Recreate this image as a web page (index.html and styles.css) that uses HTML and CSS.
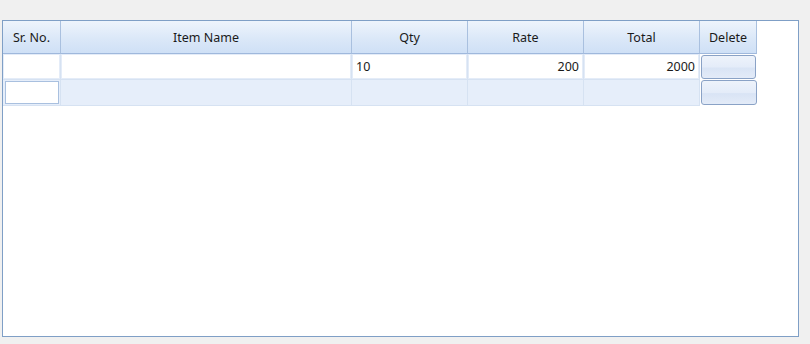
FILE: index.html
```html
<!DOCTYPE html>
<html>
<head>
<meta charset="utf-8">
<link rel="stylesheet" href="styles.css">
</head>
<body>
<div class="frame">
  <div class="grid">
    <div class="hd">Sr. No.</div>
    <div class="hd">Item Name</div>
    <div class="hd">Qty</div>
    <div class="hd">Rate</div>
    <div class="hd">Total</div>
    <div class="hd">Delete</div>

    <div class="cell r1"><div class="ed"></div></div>
    <div class="cell r1"><div class="ed"></div></div>
    <div class="cell r1"><div class="ed left">10</div></div>
    <div class="cell r1"><div class="ed right">200</div></div>
    <div class="cell r1"><div class="ed right">2000</div></div>
    <div class="cell r1 btncell"><div class="btn"></div></div>

    <div class="cell r2"><div class="input"></div></div>
    <div class="cell r2"></div>
    <div class="cell r2"></div>
    <div class="cell r2"></div>
    <div class="cell r2"></div>
    <div class="cell r2 btncell"><div class="btn"></div></div>
  </div>
</div>
</body>
</html>
```

FILE: styles.css
```css
html, body {
  margin: 0;
  padding: 0;
  background: #f0f0f0;
}
body {
  padding: 20px 0 0 2px;
  font-family: "Noto Sans", "Open Sans", sans-serif;
  font-size: 12.5px;
  color: #1a1a1a;
}
.frame {
  width: 797px;
  height: 317px;
  box-sizing: border-box;
  border: 1px solid #7f9fc6;
  background: #ffffff;
}
.grid {
  display: grid;
  grid-template-columns: 58px 291px 116px 116px 116px 57px;
  grid-template-rows: 33px 26px 26px;
}
.hd {
  box-sizing: border-box;
  border-right: 1px solid #a9c0df;
  border-bottom: 1px solid #9fb8dc;
  background: linear-gradient(#eef4fc, #dbe8f8 55%, #cfe0f6);
  display: flex;
  align-items: center;
  justify-content: center;
  padding-top: 2px;
  line-height: 1;
}
.cell {
  box-sizing: border-box;
  background: #e4ecf8;
  border-right: 1px solid #d6e2f2;
  border-bottom: 1px solid #d6e2f2;
  display: flex;
}
.r1 {
  padding: 1px;
}
.r2 {
  background: #e6eefa;
  padding: 1px;
}
.ed {
  flex: 1;
  background: #ffffff;
  display: flex;
  align-items: center;
  padding: 1px 3px 0 3px;
  line-height: 1;
}
.left { justify-content: flex-start; }
.right { justify-content: flex-end; }
.btncell {
  background: #ffffff;
  border-right: none;
  border-bottom: none;
  padding: 1px;
}
.r2.btncell {
  padding: 0 0 1px 1px;
}
.btn {
  flex: 1;
  border: 1px solid #8aa2c6;
  border-radius: 3px;
  background: linear-gradient(#eef3fb, #e4ecf9 50%, #d9e4f5 55%, #e3ebf8);
}
.input {
  flex: 1;
  margin: 0 0 0 1px;
  background: #ffffff;
  border: 1px solid #a9c0df;
}
```
